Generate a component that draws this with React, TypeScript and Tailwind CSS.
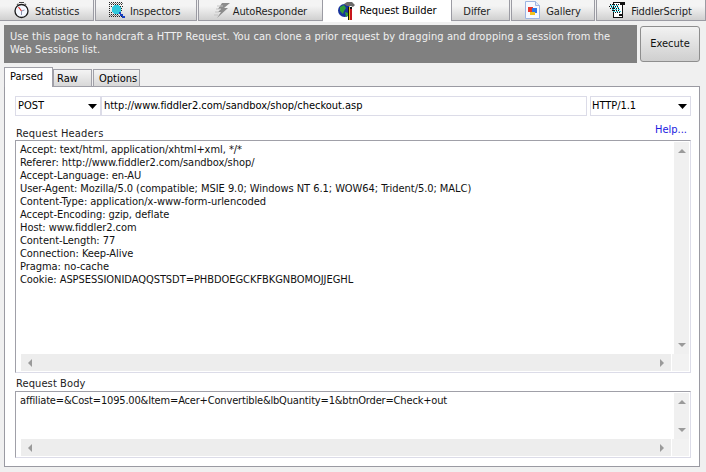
const headers = [
  'Accept: text/html, application/xhtml+xml, */*',
  'Referer: http://www.fiddler2.com/sandbox/shop/',
  'Accept-Language: en-AU',
  'User-Agent: Mozilla/5.0 (compatible; MSIE 9.0; Windows NT 6.1; WOW64; Trident/5.0; MALC)',
  'Content-Type: application/x-www-form-urlencoded',
  'Accept-Encoding: gzip, deflate',
  'Host: www.fiddler2.com',
  'Content-Length: 77',
  'Connection: Keep-Alive',
  'Pragma: no-cache',
  'Cookie: ASPSESSIONIDAQQSTSDT=PHBDOEGCKFBKGNBOMOJJEGHL',
];

// Small tab icons
const StopwatchIcon = () => (
  <svg width="15" height="18" viewBox="0 0 15 18">
    <path d="M5 1.5h5M4 2.5l-1 1.5M11 2.5l1 1.5" stroke="#444" strokeWidth="1" />
    <circle cx="7.5" cy="10" r="6.5" fill="#f4f8ff" stroke="#1a1a1a" strokeWidth="1.3" />
    <path d="M7.5 10L4.5 6" stroke="#e8332a" strokeWidth="1.2" />
    <path d="M7.5 10v4M7.5 10l3-1" stroke="#8e94b0" strokeWidth="1" />
  </svg>
);

const InspectIcon = () => (
  <svg width="16" height="16" viewBox="0 0 16 16" shapeRendering="crispEdges">
    <path d="M0 .5h14M0 2.5h14M0 12.5h9M0 14.5h13" stroke="#222" strokeWidth="1" strokeDasharray="1 1" />
    <path d="M1 1.5h13M1 13.5h9" stroke="#777" strokeWidth="1" strokeDasharray="1 1" />
    <path d="M0 4.5h3M0 6.5h2M0 8.5h2M0 10.5h3M11 4.5h3M12 6.5h2M12 8.5h2" stroke="#222" strokeWidth="1" strokeDasharray="1 1" />
    <rect x="4" y="4" width="7" height="7" fill="#30c8dc" />
    <rect x="5" y="3" width="5" height="9" fill="#30c8dc" />
    <rect x="3" y="5" width="9" height="5" fill="#30c8dc" />
    <path d="M10 10h2v2h2v2h2v2h-3v-2h-2v-2h-1z" fill="#1a3fc0" />
  </svg>
);

const BoltIcon = () => (
  <svg width="17" height="17" viewBox="0 0 17 17">
    <path d="M8 1h8L10 6h4L3 16l4-6H4l3-3H4z" fill="#8c8c8c" />
    <path d="M3 4h6M2 7h5M1 10h4M0 13h4" stroke="#c4c4c4" strokeWidth="1" />
  </svg>
);

const BuilderIcon = () => (
  <svg width="17" height="18" viewBox="0 0 17 18">
    <circle cx="6.5" cy="8.5" r="6.5" fill="#17339c" />
    <path d="M2 5l4-2 2 3-2 3-1 3-3-3zM7 10l3 1v3l-2 1z" fill="#2e9e38" />
    <path d="M6 2l3-2h5l3 3-2 2-2-1H9z" fill="#6a6a6a" />
    <rect x="10" y="5" width="4" height="13" fill="#111" />
    <rect x="11" y="5" width="1" height="13" fill="#e8c018" />
    <rect x="12" y="7" width="2" height="11" fill="#c8161c" />
  </svg>
);

const GalleryIcon = () => (
  <svg width="15" height="18" viewBox="0 0 15 18">
    <path d="M.5.5h10l4 4v13H.5z" fill="#f6f9ff" stroke="#9db4e0" />
    <path d="M10.5.5v4h4" fill="#dfe8fa" stroke="#9db4e0" />
    <rect x="3" y="6" width="5" height="5" fill="#e8352a" />
    <rect x="7" y="7" width="5" height="5" fill="#2a74e8" />
    <rect x="5" y="11" width="5" height="3" fill="#f2c31e" />
  </svg>
);

const ScriptIcon = () => (
  <svg width="16" height="16" viewBox="0 0 16 16" shapeRendering="crispEdges">
    <path d="M4.5.5h9v15h-9z" fill="#fff" stroke="#111" />
    <path d="M11 0h5v3h-5z" fill="#111" />
    <path d="M1 2.5h9M0 4.5h10M1 6.5h9M3 8.5h8M4 10.5h7" stroke="#111" strokeWidth="1" strokeDasharray="1 1" />
    <path d="M1 3.5h9M2 5.5h9M3 7.5h9M4 9.5h8" stroke="#2ec4d4" strokeWidth="1" strokeDasharray="2 1" />
    <path d="M10 12h3v2h-3z" fill="#111" />
  </svg>
);

const TopTab = ({ label, box, icon }: { label: string; box: string; icon?: React.ReactNode }) => (
  <div className={`${box} h-[21px] flex items-center border border-t-0 border-[#9b9ba3] bg-gradient-to-b from-[#f4f4f4] from-30% to-[#d0d0d0] text-[#1e1e1e]`}>
    {icon}
    <span className="pt-[4px] tracking-[-0.1px]">{label}</span>
  </div>
);

const Triangle = ({ dir }: { dir: 'up' | 'down' | 'left' | 'right' }) => {
  const paths = { up: 'M0 4L4 0L8 4Z', down: 'M0 0H8L4 4Z', left: 'M4 0V8L0 4Z', right: 'M0 0L4 4L0 8Z' };
  const vertical = dir === 'up' || dir === 'down';
  return (
    <svg width={vertical ? 8 : 4} height={vertical ? 4 : 8} viewBox={vertical ? '0 0 8 4' : '0 0 4 8'}>
      <path d={paths[dir]} fill="#9a9a9a" />
    </svg>
  );
};

const ComboArrow = () => (
  <svg width="9" height="5" viewBox="0 0 9 5">
    <path d="M0 0H9L4.5 5Z" fill="#000" />
  </svg>
);

const TextArea = ({ box, lines }: { box: string; lines: string[] }) => (
  <div className={`${box} border border-[#a0a0a8] border-r-[#dcdce8] border-b-[#dcdce8] flex flex-col bg-white`}>
    <div className="flex-1 min-h-0 flex">
      <div className="flex-1 pt-[2px] leading-[13px] text-[#111]">
        {lines.map((l) => (
          <div key={l} className="whitespace-pre">{l}</div>
        ))}
      </div>
      <div className="w-[15px] mr-[1px] mt-[1px] bg-[#f0f0f0] flex flex-col items-center justify-between py-[7px]">
        <Triangle dir="up" />
        <Triangle dir="down" />
      </div>
    </div>
    <div className="h-[17px] flex mb-[1px] ml-[1px] gap-[1px]">
      <div className="flex-1 bg-[#ededed] flex items-center justify-between px-[7px]">
        <Triangle dir="left" />
        <Triangle dir="right" />
      </div>
      <div className="w-[17px] mr-[1px] bg-[#f2f2f2]" />
    </div>
  </div>
);

export default function App() {
  return (
    <div className="w-[706px] h-[472px] overflow-hidden bg-[#f0f0f0] text-[11px] font-['DejaVu_Sans_Condensed','DejaVu_Sans',sans-serif] [font-stretch:condensed] flex flex-col">
      {/* main tab strip */}
      <div className="h-[22px] flex shrink-0">
        <TopTab label="Statistics" box="w-[95px] ml-[-1px] mr-[1px] pl-[14px] gap-[6px]" icon={<StopwatchIcon />} />
        <TopTab label="Inspectors" box="w-[102px] mr-[1px] pl-[13px] gap-[5px]" icon={<InspectIcon />} />
        <TopTab label="AutoResponder" box="w-[125px] pl-[15px] gap-[2px]" icon={<BoltIcon />} />
        <div className="w-[129px] h-[22px] bg-white flex items-center pl-[15px] gap-[5px] text-black">
          <BuilderIcon />
          <span className="tracking-[-0.1px]">Request Builder</span>
        </div>
        <TopTab label="Differ" box="w-[59px] mr-[1px] pl-[11px]" />
        <TopTab label="Gallery" box="w-[84px] mr-[1px] pl-[13px] gap-[6px]" icon={<GalleryIcon />} />
        <TopTab label="FiddlerScript" box="w-[110px] pl-[12px] gap-[6px]" icon={<ScriptIcon />} />
      </div>

      {/* info banner + execute */}
      <div className="flex mt-[3px] ml-[4px] h-[38px] shrink-0">
        <div className="w-[633px] bg-[#808080] text-[#f0f0f0] pl-[6px] pt-[5px] leading-[13px] tracking-[0.1px]">
          Use this page to handcraft a HTTP Request. You can clone a prior request by dragging and dropping a session from the
          <br />
          Web Sessions list.
        </div>
        <div className="w-[60px] h-[36px] ml-[3px] mt-[1px] rounded-[3px] border border-[#8e8e8e] bg-gradient-to-b from-[#f2f2f2] to-[#cfcfcf] flex items-center justify-center text-[#111]">
          Execute
        </div>
      </div>

      {/* inner tabs */}
      <div className="flex ml-[4px] mt-[5px] h-[19px] shrink-0 items-end relative z-10">
        <div className="w-[49px] h-[20px] bg-white border border-[#a0a0a8] border-b-0 pl-[5px] pt-[1px] text-black">Parsed</div>
        <div className="w-[39px] h-[18px] border border-[#a0a0a8] bg-gradient-to-b from-[#f4f4f4] to-[#d8d8d8] pl-[3px] pt-[1px]">Raw</div>
        <div className="w-[47px] h-[18px] ml-[1px] border border-[#a0a0a8] bg-gradient-to-b from-[#f4f4f4] to-[#d8d8d8] pl-[5px] pt-[1px]">Options</div>
      </div>

      {/* panel */}
      <div className="ml-[4px] w-[696px] h-[381px] border border-[#9a9aa2] bg-white pl-[10px] pr-[8px] shrink-0 mt-[-1px]">
        <div className="flex mt-[9px] h-[20px] tracking-[-0.03px]">
          <div className="w-[86px] border border-[#dcdce8] flex items-center justify-between pl-[2px] pr-[3px] pt-[1px] text-black">
            POST
            <ComboArrow />
          </div>
          <div className="w-[486px] border border-[#dcdce8] flex items-center pl-[2px] pt-[1px] text-black">
            http://www.fiddler2.com/sandbox/shop/checkout.asp
          </div>
          <div className="w-[101px] ml-[3px] border border-[#dcdce8] flex items-center justify-between pl-[1px] pr-[3px] pt-[1px] text-black">
            HTTP/1.1
            <ComboArrow />
          </div>
        </div>
        <div className="flex justify-between h-[24px] items-start">
          <span className="mt-[11px] ml-[1px] leading-[13px] text-[#222] tracking-[0.2px]">Request Headers</span>
          <span className="mt-[7px] mr-[4px] leading-[13px] text-[#2020e0]">Help...</span>
        </div>
        <TextArea box="h-[233px] pl-[4px] tracking-[-0.05px]" lines={headers} />
        <div className="h-[18px] leading-[13px] pt-[4px] pl-[1px] text-[#222] tracking-[0.1px]">Request Body</div>
        <TextArea box="h-[67px] pl-[4px] tracking-[-0.17px]" lines={['affiliate=&Cost=1095.00&Item=Acer+Convertible&lbQuantity=1&btnOrder=Check+out']} />
      </div>
    </div>
  );
}
